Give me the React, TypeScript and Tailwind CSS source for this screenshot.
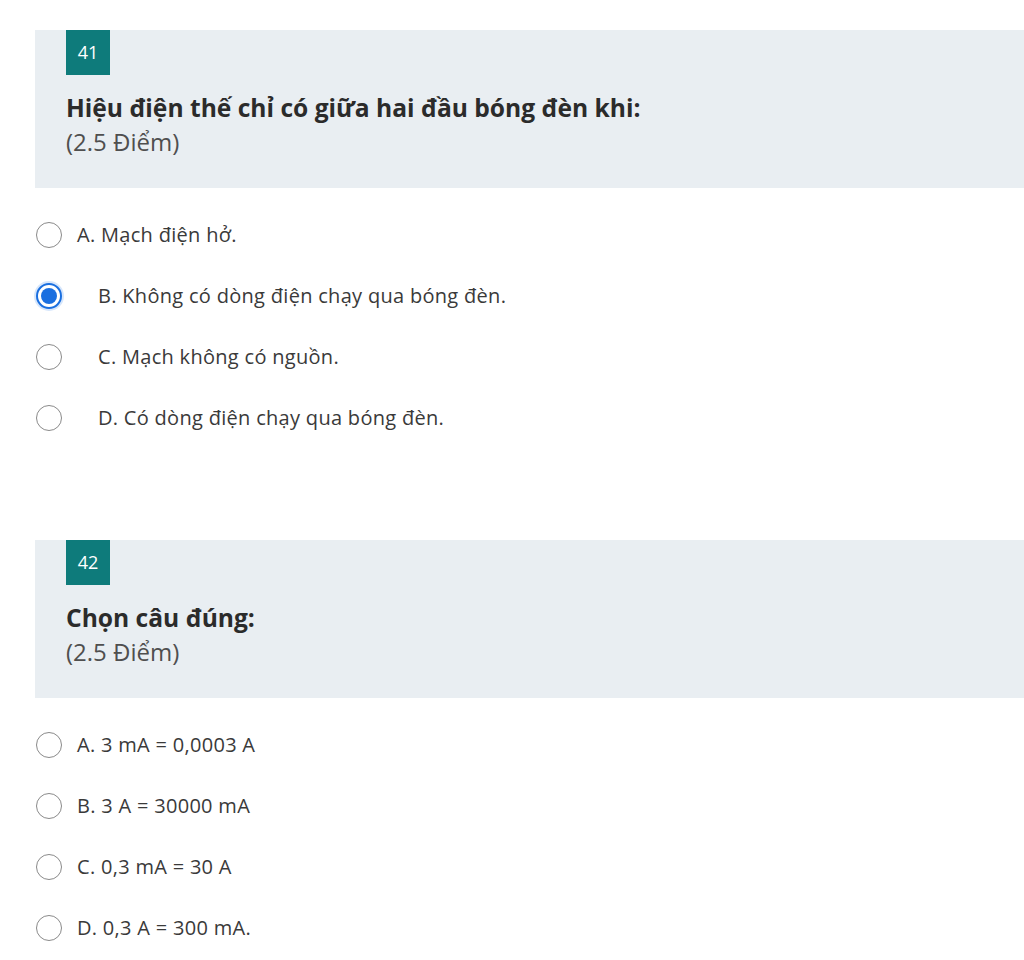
import React from 'react';

type Option = { label: string; indent?: boolean; checked?: boolean };
type Question = { no: number; title: string; points: string; options: Option[] };

const questions: Question[] = [
  {
    no: 41,
    title: 'Hiệu điện thế chỉ có giữa hai đầu bóng đèn khi:',
    points: '(2.5 Điểm)',
    options: [
      { label: 'A. Mạch điện hở.' },
      { label: 'B. Không có dòng điện chạy qua bóng đèn.', indent: true, checked: true },
      { label: 'C. Mạch không có nguồn.', indent: true },
      { label: 'D. Có dòng điện chạy qua bóng đèn.', indent: true },
    ],
  },
  {
    no: 42,
    title: 'Chọn câu đúng:',
    points: '(2.5 Điểm)',
    options: [
      { label: 'A. 3 mA = 0,0003 A' },
      { label: 'B. 3 A = 30000 mA' },
      { label: 'C. 0,3 mA = 30 A' },
      { label: 'D. 0,3 A = 300 mA.' },
    ],
  },
];

const Radio: React.FC<{ checked?: boolean }> = ({ checked }) =>
  checked ? (
    <span className="flex h-[26px] w-[26px] shrink-0 items-center justify-center rounded-full border-2 border-[#1a6fe0] bg-white shadow-[0_0_0_2px_#d6e6fb]">
      <span className="h-[16px] w-[16px] rounded-full bg-[#1a6fe0]" />
    </span>
  ) : (
    <span className="h-[26px] w-[26px] shrink-0 rounded-full border-[1.5px] border-[#8a8a8a] bg-white" />
  );

const QuestionBlock: React.FC<{ q: Question }> = ({ q }) => (
  <section>
    <div className="ml-[35px] h-[158px] bg-[#e9eef2] pl-[31px]">
      <div className="flex h-[45px] w-[44px] items-center justify-center bg-[#0e7b7b] text-[18px] text-white">
        {q.no}
      </div>
      <h2 className="mt-[17px] text-[24.6px] font-bold leading-[32px] text-[#2b2b2b]">{q.title}</h2>
      <p className="mt-[2px] text-[24px] leading-[32px] text-[#4f4f4f]">{q.points}</p>
    </div>
    <ul className="mt-[16px] pl-[36px]">
      {q.options.map((o) => (
        <li key={o.label} className="flex h-[61px] items-center">
          <Radio checked={o.checked} />
          <span className={`${o.indent ? 'ml-[36px]' : 'ml-[15px]'} text-[20px] tracking-[0.3px] text-[#3a3a3a]`}>
            {o.label}
          </span>
        </li>
      ))}
    </ul>
  </section>
);

export default function App() {
  return (
    <div className="min-h-[960px] overflow-hidden bg-white pt-[30px] font-['Open_Sans',sans-serif]">
      <QuestionBlock q={questions[0]} />
      <div className="h-[92px]" />
      <QuestionBlock q={questions[1]} />
    </div>
  );
}
